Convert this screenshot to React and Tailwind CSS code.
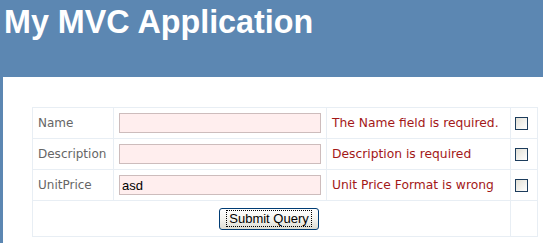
import React from "react";

const cell = "border-r border-b border-[#e8eef4] flex items-center";

function Row({ label, value, msg }) {
  return (
    <>
      <div className={`${cell} px-[5px] text-[12px] text-[#666] font-['DejaVu_Sans',sans-serif]`}>{label}</div>
      <div className={`${cell} px-[5px]`}>
        <input
          readOnly
          defaultValue={value}
          className="w-[202px] h-[20px] border border-[#cdbcbc] bg-[#ffeeee] px-[2px] text-[13px] text-black font-['Liberation_Sans',Arial,sans-serif] outline-none"
        />
      </div>
      <div className={`${cell} px-[5px] text-[12.3px] text-[#a31818] font-['DejaVu_Sans',sans-serif] whitespace-nowrap`}>{msg}</div>
      <div className={`${cell} pl-[4px]`}>
        <div className="w-[13px] h-[13px] border border-[#1c3c5c] bg-gradient-to-br from-[#e2e0d6] to-white"></div>
      </div>
    </>
  );
}

export default function App() {
  return (
    <div className="w-full h-[243px] bg-[#5c87b2] overflow-hidden">
      <div className="h-[77px] pl-[4px] pt-[4px]">
        <h1 className="text-[32.3px] leading-[36px] font-bold text-white font-['Liberation_Sans',Arial,sans-serif]">
          My MVC Application
        </h1>
      </div>
      <div className="ml-[3px] bg-white pt-[30px] pl-[29px] h-[166px]">
        <div className="inline-grid grid-cols-[81px_213px_184px_27px] grid-rows-[31px_31px_31px_36px] border-l border-t border-[#e8eef4]">
          <Row label="Name" value="" msg="The Name field is required." />
          <Row label="Description" value="" msg="Description is required" />
          <Row label="UnitPrice" value="asd" msg="Unit Price Format is wrong" />
          <div className={`${cell} col-span-3 justify-center pr-[5px]`}>
            <button className="w-[100px] h-[22px] border border-[#003c74] rounded-[3px] bg-gradient-to-b from-white via-[#f4f4f0] to-[#dcdcd2] flex items-center justify-center p-[2px]">
              <span className="border border-dotted border-black px-[2px] h-[17px] flex items-center text-[13px] leading-none text-black font-['Liberation_Sans',Arial,sans-serif]">
                Submit Query
              </span>
            </button>
          </div>
          <div className={cell}></div>
        </div>
      </div>
    </div>
  );
}
